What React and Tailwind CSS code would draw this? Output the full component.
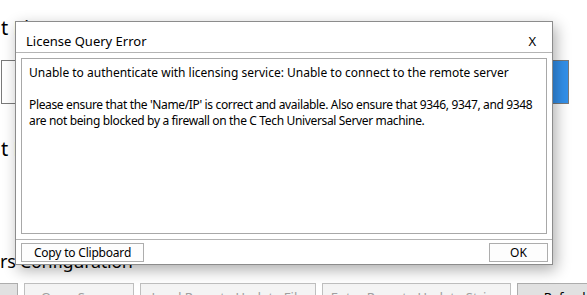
import React from 'react';

const BottomButton = ({ className = '', children }) => (
  <div className={`h-[28px] shrink-0 border flex justify-center pt-[4px] text-[13px] leading-[18px] ${className}`}>
    {children}
  </div>
);

const LicenseErrorDialog = () => (
  <div className="absolute left-[15px] top-[21px] w-[538px] h-[244px] flex flex-col bg-white border border-[#8c8c8c] shadow-[3px_5px_14px_rgba(0,0,0,0.32)] text-black">
    <div className="h-[31px] shrink-0 flex justify-between border-b border-[#b4b4b4] pl-[10px] pr-[16px] pt-[9px]">
      <span className="text-[13px] leading-[20px]">License Query Error</span>
      <span className="text-[13px] leading-[20px]">X</span>
    </div>
    <div className="flex-1 min-h-0 p-[5px]">
      <div className="h-full border border-[#a8a8a8] px-[7px] pt-[6px] text-[12px] leading-[16px] whitespace-nowrap">
        <p>Unable to authenticate with licensing service: Unable to connect to the remote server</p>
        <p className="mt-[16px] tracking-[-0.35px]">
          Please ensure that the 'Name/IP' is correct and available. Also ensure that 9346, 9347, and 9348
          <br />
          are not being blocked by a firewall on the C Tech Universal Server machine.
        </p>
      </div>
    </div>
    <div className="h-[25px] shrink-0 border-t border-[#b4b4b4] flex justify-between items-start pt-[3px] pl-[5px] pr-[4px]">
      <button className="w-[123px] h-[19px] border border-[#adadad] bg-[#fdfdfd] text-[12px] leading-[16px] tracking-[-0.2px]">Copy to Clipboard</button>
      <button className="w-[59px] h-[19px] border border-[#adadad] bg-[#fdfdfd] text-[12px] leading-[16px]">OK</button>
    </div>
  </div>
);

export default function App() {
  return (
    <div className="relative w-[587px] h-[295px] overflow-hidden bg-white font-['Segoe_UI','Noto_Sans',sans-serif] text-black">
      <div className="flex flex-col">
        <div className="mt-[14px] h-[28px] text-[20px] leading-[28px] whitespace-nowrap pl-[1px]">t License Server</div>

        <div className="mt-[18px] h-[44px] flex">
          <div className="flex-1 ml-[1px] border border-[#7a7a7a] bg-white"></div>
          <div className="w-[80px] ml-[12px] mr-[18px] border border-[#7a7a7a] bg-[#3391ec]"></div>
        </div>

        <div className="mt-[31px] h-[28px] text-[20px] leading-[28px] whitespace-nowrap pl-[1px]">t License Status</div>

        <div className="mt-[86px] h-[24px] text-[18px] leading-[24px] whitespace-nowrap tracking-[-0.3px]">rs Configuration</div>

        <div className="mt-[10px] flex">
          <BottomButton className="w-[40px] -ml-[22px] border-[#adadad] bg-[#e1e1e1] text-black">&nbsp;</BottomButton>
          <BottomButton className="w-[110px] ml-[6px] border-[#bfbfbf] bg-[#f4f4f4] text-[#a0a0a0]">Open Server</BottomButton>
          <BottomButton className="w-[176px] ml-[6px] border-[#bfbfbf] bg-[#f4f4f4] text-[#a0a0a0]">Load Remote Update File</BottomButton>
          <BottomButton className="w-[189px] ml-[6px] border-[#bfbfbf] bg-[#f4f4f4] text-[#a0a0a0]">Enter Remote Update String</BottomButton>
          <BottomButton className="w-[100px] ml-[6px] border-[#adadad] bg-[#e1e1e1] text-black">Refresh</BottomButton>
        </div>
      </div>

      <LicenseErrorDialog />
    </div>
  );
}
